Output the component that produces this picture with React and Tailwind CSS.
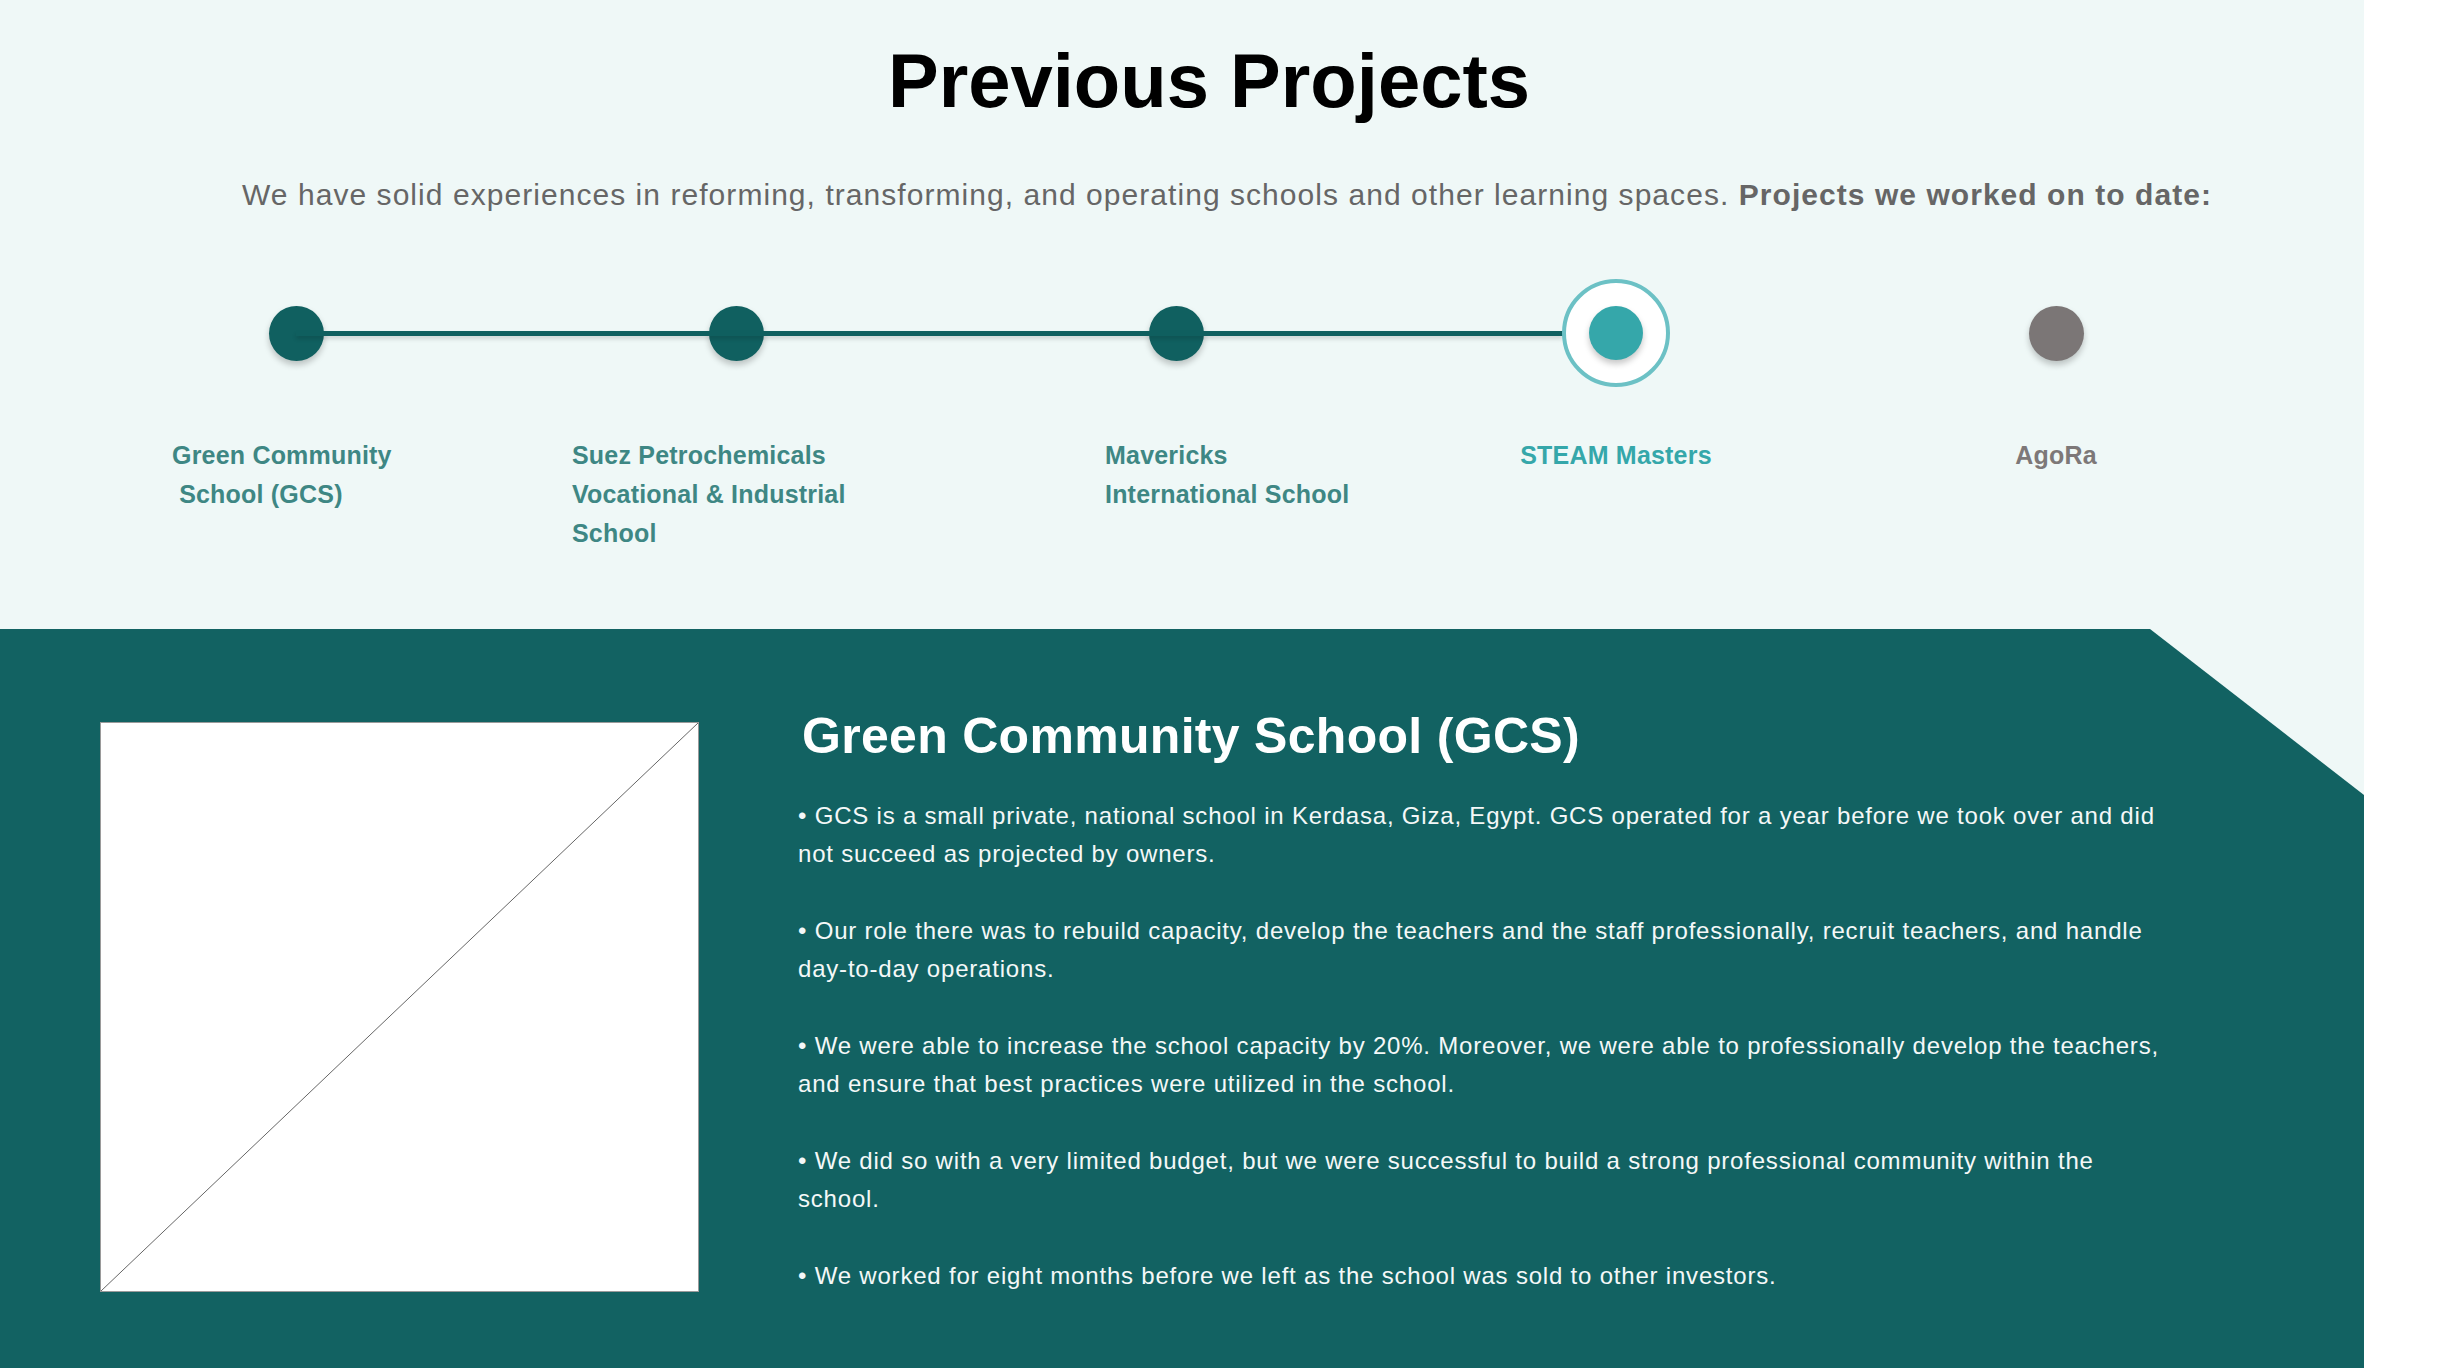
import React from 'react';

const projects = [
  {
    lines: ['Green Community', '\u00a0School (GCS)'],
    state: 'done',
    labelClass: 'pl-[96px] text-left text-[#3e8784]'
  },
  {
    lines: ['Suez Petrochemicals', 'Vocational & Industrial', 'School'],
    state: 'done',
    labelClass: 'pl-[56px] text-left text-[#3e8784]'
  },
  {
    lines: ['Mavericks', 'International School'],
    state: 'done',
    labelClass: 'pl-[149px] text-left text-[#3e8784]'
  },
  {
    lines: ['STEAM Masters'],
    state: 'active',
    labelClass: 'text-center text-[#35a7aa]'
  },
  {
    lines: ['AgoRa'],
    state: 'next',
    labelClass: 'text-center text-[#7d7878]'
  }
];

const bullets = [
  'GCS is a small private, national school in Kerdasa, Giza, Egypt. GCS operated for a year before we took over and did not succeed as projected by owners.',
  'Our role there was to rebuild capacity, develop the teachers and the staff professionally, recruit teachers, and handle day-to-day operations.',
  'We were able to increase the school capacity by 20%. Moreover, we were able to professionally develop the teachers, and ensure that best practices were utilized in the school.',
  'We did so with a very limited budget, but we were successful to build a strong professional community within the school.',
  'We worked for eight months before we left as the school was sold to other investors.'
];

const Dot = ({ state }) => {
  if (state === 'active') {
    return (
      <div className="w-[108px] h-[108px] rounded-full bg-white border-[4px] border-[#6cc1c5] flex items-center justify-center relative z-20">
        <div className="w-[54px] h-[54px] rounded-full bg-[#35a7aa] shadow-[0_4px_6px_rgba(0,0,0,0.22)]" />
      </div>
    );
  }
  const color = state === 'next' ? 'bg-[#7b7676]' : 'bg-[#106060]';
  return (
    <div className={`w-[55px] h-[55px] rounded-full ${color} shadow-[0_4px_6px_rgba(0,0,0,0.22)]`} />
  );
};

const App = () => {
  return (
    <div className="flex w-full min-h-[1368px] bg-white font-['Liberation_Sans',Arial,sans-serif]">
      <div className="w-[2364px] shrink-0 flex flex-col">
        {/* Header + timeline */}
        <section className="bg-[#eff8f7] pt-[43px] pb-[76px]">
          <h1 className="pl-[54px] text-center text-[76px] leading-[76px] font-bold text-black">
            Previous Projects
          </h1>
          <p className="pl-[90px] mt-[58px] text-center text-[30px] leading-[36px] tracking-[1.05px] text-[#666666]">
            We have solid experiences in reforming, transforming, and operating schools and other learning spaces.{' '}
            <b className="font-bold">Projects we worked on to date:</b>
          </p>

          {/* circles */}
          <div className="relative mt-[66px] px-[76px] flex">
            {projects.map((p, i) => (
              <div key={i} className="w-[440px] h-[108px] flex items-center justify-center">
                <Dot state={p.state} />
              </div>
            ))}
            <div className="absolute left-[296px] top-[52px] w-[1267px] h-[5px] bg-[#0f5f5f] shadow-[0_3px_4px_rgba(0,0,0,0.15)] z-10" />
          </div>

          {/* labels */}
          <div className="mt-[49px] px-[76px] flex">
            {projects.map((p, i) => (
              <div key={i} className={`w-[440px] text-[25px] leading-[39px] font-bold tracking-[0.2px] ${p.labelClass}`}>
                {p.lines.map((l, j) => (
                  <div key={j}>{l}</div>
                ))}
              </div>
            ))}
          </div>
        </section>

        {/* Detail panel */}
        <section className="bg-[#eff8f7]">
          <div className="bg-[#126262] min-h-[739px] [clip-path:polygon(0_0,2150px_0,100%_166px,100%_100%,0_100%)] flex items-start pl-[100px] pt-[77px] pb-[60px]">
            <div className="w-[599px] h-[570px] mt-[16px] shrink-0 bg-white border border-[#9a9a9a]">
              <svg className="w-full h-full" viewBox="0 0 597 568" preserveAspectRatio="none">
                <line x1="0" y1="568" x2="597" y2="0" stroke="#666666" strokeWidth="1" />
              </svg>
            </div>
            <div className="ml-[99px] w-[1378px] text-white">
              <h2 className="text-[50px] leading-[60px] font-bold tracking-[0.3px] pl-[4px]">Green Community School (GCS)</h2>
              <div className="mt-[31px] flex flex-col gap-[39px]">
                {bullets.map((b, i) => (
                  <p key={i} className="text-[24px] leading-[38px] tracking-[0.8px] text-[#f4f8f8]">
                    • {b}
                  </p>
                ))}
              </div>
            </div>
          </div>
        </section>
      </div>
      <div className="flex-1 bg-white" />
    </div>
  );
};

export default App;
